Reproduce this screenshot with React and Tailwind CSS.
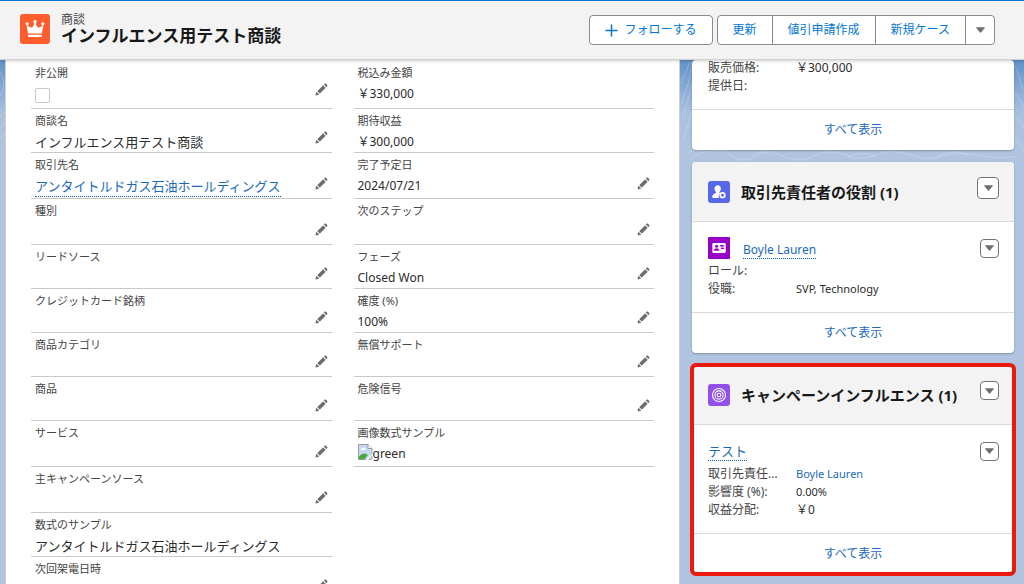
import React from 'react';

const ROWS = [
    {
        height: 'min-h-12',
        left: { label: '非公開', checkbox: true, editable: true },
        right: { label: '税込み金額', value: '￥330,000', latin: true },
    },
    {
        height: 'min-h-11',
        left: { label: '商談名', value: 'インフルエンス用テスト商談', editable: true },
        right: { label: '期待収益', value: '￥300,000', latin: true },
    },
    {
        height: 'min-h-[46px]',
        left: { label: '取引先名', value: 'アンタイトルドガス石油ホールディングス', link: true, editable: true },
        right: { label: '完了予定日', value: '2024/07/21', latin: true, editable: true },
    },
    {
        height: 'min-h-[46px]',
        left: { label: '種別', editable: true },
        right: { label: '次のステップ', editable: true },
    },
    {
        height: 'min-h-11',
        left: { label: 'リードソース', editable: true },
        right: { label: 'フェーズ', value: 'Closed Won', latin: true, editable: true },
    },
    {
        height: 'min-h-11',
        left: { label: 'クレジットカード銘柄', editable: true },
        right: { label: '確度 (%)', value: '100%', latin: true, editable: true },
    },
    {
        height: 'min-h-11',
        left: { label: '商品カテゴリ', editable: true },
        right: { label: '無償サポート', editable: true },
    },
    {
        height: 'min-h-11',
        left: { label: '商品', editable: true },
        right: { label: '危険信号', editable: true },
    },
    {
        height: 'min-h-[46px]',
        left: { label: 'サービス', editable: true },
        right: { label: '画像数式サンプル', value: 'green', latin: true, broken: true },
    },
    {
        height: 'min-h-[46px]',
        left: { label: '主キャンペーンソース', editable: true },
    },
    {
        height: 'min-h-11',
        left: { label: '数式のサンプル', value: 'アンタイトルドガス石油ホールディングス' },
    },
    {
        height: 'min-h-11',
        left: { label: '次回架電日時', editable: true },
    },
];

const PencilIcon = () => (
    <svg viewBox="0 0 52 52" className="w-[13px] h-[13px] fill-[#706e6b]" aria-hidden="true">
        <path d="M9.5 33.4l8.9 8.9c.4.4 1 .4 1.4 0L42 20c.4-.4.4-1 0-1.4l-8.8-8.8c-.4-.4-1-.4-1.4 0L9.5 32.1c-.4.4-.4 1 0 1.3zM36.1 5.7c-.4.4-.4 1 0 1.4l8.8 8.8c.4.4 1 .4 1.4 0l2.5-2.5c1.6-1.5 1.6-3.9 0-5.5l-4.7-4.7c-1.6-1.6-4.1-1.6-5.7 0l-2.3 2.5zM2.1 48.2c-.2 1 .7 1.9 1.7 1.7l10.9-2.6c.4-.1.7-.3.9-.5l.2-.2c.2-.2.3-.9-.1-1.3l-9-9c-.4-.4-1.1-.3-1.3-.1l-.2.2c-.3.3-.4.6-.5.9L2.1 48.2z" />
    </svg>
);

const ArrowDown = () => (
    <svg viewBox="0 0 10 6" className="w-[9px] h-[6px] fill-[#706e6b]" aria-hidden="true">
        <path d="M.8 0h8.4c.6 0 .8.5.5.9L5.5 5.7c-.3.3-.7.3-1 0L.3.9C0 .5.2 0 .8 0z" />
    </svg>
);

const CrownIcon = () => (
    <svg viewBox="0 0 30 30" className="w-[30px] h-[30px] shrink-0" aria-hidden="true">
        <rect width="30" height="30" rx="3" fill="#ff5d2d" />
        <g fill="#fff">
            <circle cx="7.2" cy="9.8" r="1.6" />
            <circle cx="15" cy="7.6" r="1.7" />
            <circle cx="22.8" cy="9.8" r="1.6" />
            <path d="M6.6 10.6c1.6 1.9 3.4 3 5 2.9 1.4-.2 2.3-2 2.7-4.9h1.4c.4 2.9 1.3 4.7 2.7 4.9 1.6.1 3.4-1 5-2.9l-1.3 8.1c-.1.5-.5.8-1 .8H8.9c-.5 0-.9-.3-1-.8z" />
            <rect x="8" y="20.8" width="14" height="2.3" rx="1.1" />
        </g>
    </svg>
);

const ContactRoleIcon = () => (
    <svg viewBox="0 0 22 22" className="w-[22px] h-[22px] shrink-0" aria-hidden="true">
        <rect width="22" height="22" rx="3" fill="#5867e8" />
        <path
            fill="#fff"
            d="M9.7 4.2c1.8 0 3.2 1.5 3.2 3.4 0 1.4-.6 2.5-1.4 3.3-.3.4-.2.9.2 1.1l.5.3c-1.2.8-1.7 2-1.5 3.5 0 .6.2 1 .4 1.3H5.6c-.8 0-1.3-.5-1.3-1.2 0-1.7 1-2.6 3.4-3.8.5-.3.6-.8.2-1.200-.8-.8-1.4-1.900-1.4-3.300 0-1.900 1.4-3.400 3.200-3.400z"
        />
        <circle cx="14.5" cy="14.2" r="2.3" fill="none" stroke="#fff" strokeWidth="1.7" />
    </svg>
);

const ContactIcon = () => (
    <svg viewBox="0 0 22 22" className="w-[22px] h-[22px] shrink-0" aria-hidden="true">
        <rect width="22" height="22" rx="1" fill="#9602c7" />
        <rect x="4.3" y="6" width="13.4" height="10" rx="1.3" fill="#fff" />
        <g fill="#9602c7">
            <circle cx="8.6" cy="9.3" r="1.5" />
            <path d="M5.8 13.7c0-1.5 1.3-2.5 2.8-2.5s2.8 1 2.8 2.5z" />
            <rect x="11.8" y="8.1" width="4.2" height="1.3" rx=".5" />
            <rect x="12.8" y="10.6" width="3.2" height="1.3" rx=".5" />
        </g>
    </svg>
);

const CampaignIcon = () => (
    <svg viewBox="0 0 22 22" className="w-[22px] h-[22px] shrink-0" aria-hidden="true">
        <rect width="22" height="22" rx="3" fill="#9050e9" />
        <g fill="none" stroke="#fff" strokeWidth="1.1">
            <circle cx="11" cy="11" r="6.5" />
            <circle cx="11" cy="11" r="4.1" />
            <circle cx="11" cy="11" r="1.8" />
        </g>
    </svg>
);

const BrokenImage = () => (
    <svg viewBox="0 0 15 16" className="w-[15px] h-4 shrink-0" aria-hidden="true">
        <path d="M.5.5h9.5l4 4v6l-5.5 5H.5z" fill="#c5d9f7" stroke="#9b9b9b" />
        <path d="M10 .5v4h4" fill="#fff" stroke="#9b9b9b" />
        <path d="M3 5.5c0-1 .8-1.5 1.6-1.3C5.2 3 7 3.3 7 4.6c.8 0 1 .9.4 1.3H3.4z" fill="#fff" />
        <path d="M1 15v-2.5C3 10 5.5 9 7.5 9.5c1 .3 1.8 1 2.3 1.8L6.5 15z" fill="#4ba83a" />
        <path d="M7.5 16l7.5-7v2l-5 5z" fill="#fff" />
        <path d="M10.5 15.5h3.5V12z" fill="#c5d9f7" stroke="#9b9b9b" strokeWidth=".6" />
    </svg>
);

// Faint contour lines over the page background
const Contours = () => (
    <svg
        className="absolute inset-0 w-full h-full"
        viewBox="0 60 1024 524"
        preserveAspectRatio="none"
        fill="none"
        stroke="#fff"
        strokeOpacity=".22"
        aria-hidden="true"
    >
        <path d="M-6 66c8 6 14 18 6 30M-4 118c6-2 10-6 12-12M-6 130c8-2 12-8 14-14M-6 142c9-4 12-8 14-14" />
        <path d="M682 104c2-14 10-22 9-42M684 118c2-20 8-24 9-42M681 84c2-8 6-10 8-22M683 140c5-10 5-20 10-30" />
        <path d="M690 160c8-10 24-8 30-10s14 12 26 10 14-10 24-8 18 8 30 8 14-8 30-8 20 8 34 6 20-8 34-6 22 8 34 6 24-6 40-4 26 6 44 2" />
        <path d="M686 156c4-6 10-8 18-5M752 156c8-6 14-4 20 0M848 158c8-6 18-6 28-1M938 156c12-5 20-5 32 0" />
        <path d="M1015 66c6 10 4 20 10 26M1014 92c6 6 8 14 11 18M1014 116c4 4 8 6 11 14M1013 140c6 0 8 6 11 12" />
    </svg>
);

const Field = ({ label, value, latin, link, checkbox, broken, editable }) => (
    <div className="flex h-full justify-between border-b border-[#c9c9c9] px-1 pt-1">
        {checkbox ? (
            <label className="block text-[11px] leading-4 text-[#444]">
                {label}
                <input
                    type="checkbox"
                    className="mt-[7px] block h-[15px] w-[15px] appearance-none rounded-xs border border-[#c9c9c9] bg-white"
                />
            </label>
        ) : (
            <div>
                <div className="text-[11px] leading-4 text-[#444]">{label}</div>
                {value && (
                    <div className={`mt-[3px] flex leading-5 text-[#2b2b2b] ${latin ? 'text-xs' : 'text-[13px]'}`}>
                        {broken && <BrokenImage />}
                        {link ? (
                            <a href="#account" className="border-b border-dotted border-[#0b5cab] text-[#1b6ab8]">
                                {value}
                            </a>
                        ) : (
                            <span>{value}</span>
                        )}
                    </div>
                )}
            </div>
        )}
        {editable && (
            <button type="button" aria-label={`${label} を編集`} className={`self-end ${checkbox ? 'pb-3' : 'pb-2'}`}>
                <PencilIcon />
            </button>
        )}
    </div>
);

const MenuButton = ({ large }) => (
    <button
        type="button"
        aria-label="アクションを表示"
        className={`flex shrink-0 items-center justify-center rounded border border-[#747474] bg-white ${
            large ? 'h-[22px] w-[22px]' : 'h-[19px] w-[19px]'
        }`}
    >
        <ArrowDown />
    </button>
);

const CardHeader = ({ icon, title, large }) => (
    <div className="flex h-15 items-center rounded-t border-b border-[#dddbda] bg-[#f3f3f3] pl-4 pr-[15px]">
        {icon}
        <h2 className="ml-[11px] flex-1 text-[15px] leading-5 font-bold text-[#181818]">{title}</h2>
        <div className="mb-2">
            <MenuButton large={large} />
        </div>
    </div>
);

const CardFooter = () => (
    <div className="flex h-[41px] items-center justify-center border-t border-[#dddbda] text-xs">
        <a href="#all" className="text-[#1b6ab8]">すべて表示</a>
    </div>
);

const Details = ({ items }) => (
    <dl className="grid grid-cols-[88px_1fr] text-xs leading-[18px] text-[#444]">
        {items.map(([term, detail, href]) => (
            <React.Fragment key={term}>
                <dt>{term}</dt>
                <dd className={`text-[#2b2b2b] ${/^[\x20-\x7e]+$/.test(detail) ? 'text-[11px]' : ''}`}>
                    {href ? <a href={href} className="text-[#1b6ab8]">{detail}</a> : detail}
                </dd>
            </React.Fragment>
        ))}
    </dl>
);

const Card = ({ children, className = '' }) => (
    <section className={`rounded bg-white shadow-[0_1px_2px_rgba(0,0,0,0.25)] ${className}`}>{children}</section>
);

const App = () => {
    return (
        <div className="flex h-screen flex-col overflow-hidden bg-[#b0c4df] font-['Noto_Sans','Noto_Sans_CJK_JP',sans-serif]">
            <header className="relative z-10 flex h-15 shrink-0 items-center border-t border-b border-t-[#0176d3] border-b-[#d0d0d0] bg-[#f3f3f3] pl-5 pr-[29px] shadow-[0_1px_3px_rgba(0,0,0,0.2)]">
                <div className="mb-[3px] flex flex-1 items-center gap-[11px]">
                    <CrownIcon />
                    <div>
                        <p className="text-xs leading-[14px] text-[#444]">商談</p>
                        <h1 className="text-[17px] leading-[18px] font-bold text-[#181818]">インフルエンス用テスト商談</h1>
                    </div>
                </div>
                <div className="flex gap-1 text-xs text-[#0176d3]">
                    <button
                        type="button"
                        className="flex h-[30px] items-center gap-[7px] rounded border border-[#8a8a8a] bg-white px-[15px]"
                    >
                        <svg viewBox="0 0 13 13" className="h-[13px] w-[13px]" stroke="currentColor" strokeWidth="1.5" strokeLinecap="round" aria-hidden="true">
                            <path d="M6.5 1v11M1 6.5h11" />
                        </svg>
                        フォローする
                    </button>
                    <div className="flex h-[30px] divide-x divide-[#8a8a8a] rounded border border-[#8a8a8a] bg-white">
                        <button type="button" className="px-[15px]">更新</button>
                        <button type="button" className="px-[15px]">値引申請作成</button>
                        <button type="button" className="px-[15px]">新規ケース</button>
                        <button type="button" aria-label="その他のアクション" className="flex w-7 items-center justify-center">
                            <ArrowDown />
                        </button>
                    </div>
                </div>
            </header>

            <div className="relative min-h-0 flex-1 bg-linear-to-b from-[#5f91c7] from-0% via-[#a9c0df] via-[52px] to-[#b0c4df] to-[90px]">
                <Contours />
                <div className="relative flex h-full items-stretch gap-3 overflow-hidden pl-[5px] pr-2.5">
                    <main className="flex-1 border-x border-[#d0d0d0] bg-white px-[25px] pt-px">
                        {ROWS.map((row) => (
                            <div key={row.left.label} className={`grid grid-cols-2 gap-x-[22px] ${row.height}`}>
                                <Field {...row.left} />
                                {row.right && <Field {...row.right} />}
                            </div>
                        ))}
                    </main>

                    <aside className="flex w-[322px] shrink-0 flex-col gap-3">
                        <Card>
                            <div className="-mt-px px-4 pb-3.5">
                                <Details items={[['販売価格:', '￥300,000'], ['提供日:', '']]} />
                            </div>
                            <CardFooter />
                        </Card>

                        <Card>
                            <CardHeader icon={<ContactRoleIcon />} title="取引先責任者の役割 (1)" large />
                            <div className="pt-[15px] pr-[15px] pb-3.5 pl-4">
                                <div className="mb-[3px] flex h-[22px] items-center">
                                    <ContactIcon />
                                    <div className="ml-[13px] flex-1 pt-1 text-xs">
                                        <a href="#contact" className="border-b border-dotted border-[#0b5cab] text-[#1b6ab8]">
                                            Boyle Lauren
                                        </a>
                                    </div>
                                    <MenuButton />
                                </div>
                                <Details items={[['ロール:', ''], ['役職:', 'SVP, Technology']]} />
                            </div>
                            <CardFooter />
                        </Card>

                        <Card className="outline-4 -outline-offset-2 outline-[#ea1b0e]">
                            <CardHeader icon={<CampaignIcon />} title="キャンペーンインフルエンス (1)" />
                            <div className="pt-[15px] pr-[15px] pb-3.5 pl-4">
                                <div className="mb-[3px] flex h-[22px] items-center">
                                    <div className="flex-1 pt-0.5 text-[13px]">
                                        <a href="#influence" className="border-b border-dotted border-[#0b5cab] text-[#1b6ab8]">
                                            テスト
                                        </a>
                                    </div>
                                    <MenuButton />
                                </div>
                                <Details
                                    items={[
                                        ['取引先責任...', 'Boyle Lauren', '#contact'],
                                        ['影響度 (%):', '0.00%'],
                                        ['収益分配:', '￥0'],
                                    ]}
                                />
                            </div>
                            <CardFooter />
                        </Card>
                    </aside>
                </div>
            </div>
        </div>
    );
};

export default App;
